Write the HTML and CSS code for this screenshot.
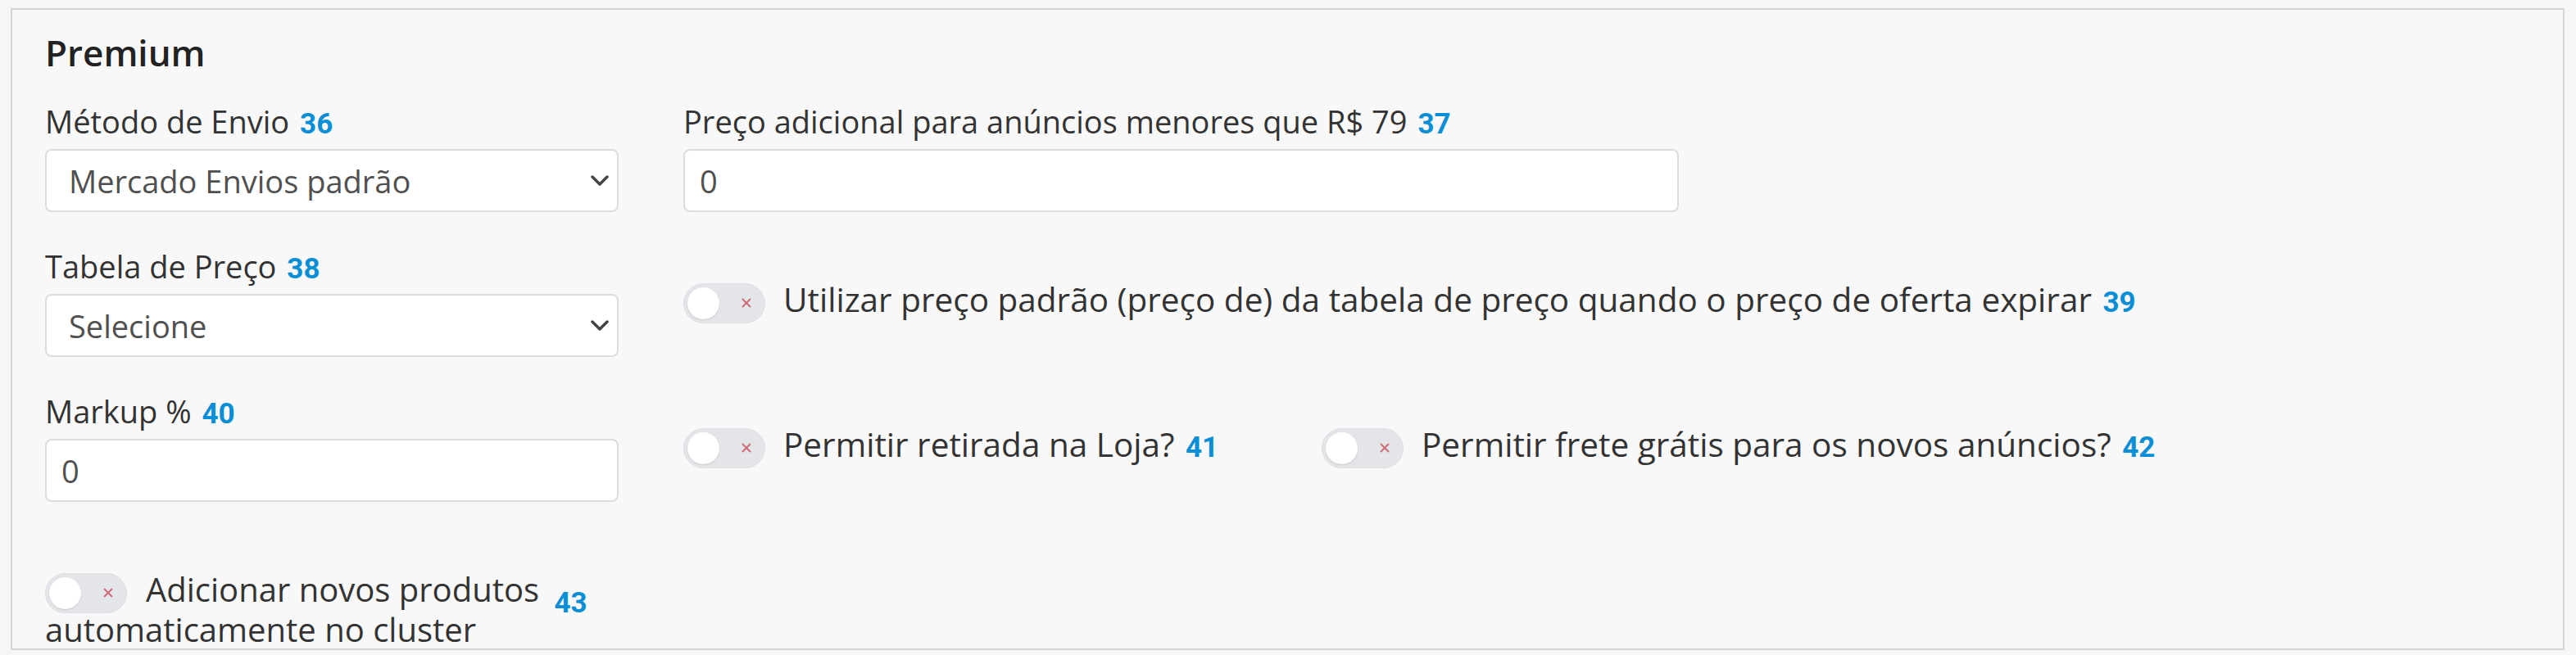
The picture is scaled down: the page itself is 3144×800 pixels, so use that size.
FILE: index.html
```html
<!DOCTYPE html>
<html lang="pt-BR">
<head>
    <meta charset="UTF-8">
    <meta name="viewport" content="width=device-width, initial-scale=1.0">
    <title>Premium</title>
    <link rel="stylesheet" href="styles.css">
</head>
<body>
    <div class="panel">
        <h2 class="panel-title">Premium</h2>

        <div class="form-grid">
            <!-- linha 1 -->
            <div class="field">
                <label class="field-label">Método de Envio <span class="num">36</span></label>
                <div class="select-wrap">
                    <select class="control control-select">
                        <option>Mercado Envios padrão</option>
                    </select>
                    <svg class="chevron" width="22" height="13" viewBox="0 0 22 13"><path d="M2 2 L11 11 L20 2" fill="none" stroke="#444" stroke-width="3.5" stroke-linecap="round" stroke-linejoin="round"/></svg>
                </div>
            </div>
            <div class="field field-wide">
                <label class="field-label">Preço adicional para anúncios menores que R$ 79 <span class="num">37</span></label>
                <input type="text" class="control control-input control-wide" value="0">
            </div>

            <!-- linha 2 -->
            <div class="field">
                <label class="field-label">Tabela de Preço <span class="num">38</span></label>
                <div class="select-wrap">
                    <select class="control control-select">
                        <option>Selecione</option>
                    </select>
                    <svg class="chevron" width="22" height="13" viewBox="0 0 22 13"><path d="M2 2 L11 11 L20 2" fill="none" stroke="#444" stroke-width="3.5" stroke-linecap="round" stroke-linejoin="round"/></svg>
                </div>
            </div>
            <div class="switch-cell span-3">
                <span class="switch"><span class="knob"></span><svg class="switch-x" width="14" height="14" viewBox="0 0 14 14"><path d="M2 2 L12 12 M12 2 L2 12" stroke="#cf6b76" stroke-width="2"/></svg></span>
                <span class="switch-label">Utilizar preço padrão (preço de) da tabela de preço quando o preço de oferta expirar <span class="num">39</span></span>
            </div>

            <!-- linha 3 -->
            <div class="field">
                <label class="field-label">Markup % <span class="num">40</span></label>
                <input type="text" class="control control-input" value="0">
            </div>
            <div class="switch-cell">
                <span class="switch"><span class="knob"></span><svg class="switch-x" width="14" height="14" viewBox="0 0 14 14"><path d="M2 2 L12 12 M12 2 L2 12" stroke="#cf6b76" stroke-width="2"/></svg></span>
                <span class="switch-label">Permitir retirada na Loja? <span class="num">41</span></span>
            </div>
            <div class="switch-cell span-2">
                <span class="switch"><span class="knob"></span><svg class="switch-x" width="14" height="14" viewBox="0 0 14 14"><path d="M2 2 L12 12 M12 2 L2 12" stroke="#cf6b76" stroke-width="2"/></svg></span>
                <span class="switch-label">Permitir frete grátis para os novos anúncios? <span class="num">42</span></span>
            </div>

            <!-- linha 4 -->
            <div class="switch-inline">
                <span class="switch"><span class="knob"></span><svg class="switch-x" width="14" height="14" viewBox="0 0 14 14"><path d="M2 2 L12 12 M12 2 L2 12" stroke="#cf6b76" stroke-width="2"/></svg></span>Adicionar novos produtos <span class="num num-low">43</span> automaticamente no cluster
            </div>
        </div>
    </div>
</body>
</html>
```

FILE: styles.css
```css
body {
    margin: 0;
    background-color: #f6f6f6;
    font-family: "Open Sans", "Liberation Sans", sans-serif;
    color: #333;
}

.panel {
    box-sizing: border-box;
    margin: 10px 0 0 13px;
    width: 3117px;
    background-color: #f8f8f8;
    border: 2px solid #d5d5d5;
    padding: 24px 40px 0 40px;
}

.panel-title {
    margin: 0 0 33px 0;
    font-size: 44px;
    line-height: 56px;
    font-weight: 600;
    color: #222;
}

.form-grid {
    display: grid;
    grid-template-columns: repeat(4, 700px);
    column-gap: 79px;
    row-gap: 43px;
    align-items: start;
}

/* campos */
.field {
    grid-column: 1;
}
.field-label {
    display: block;
    font-size: 38px;
    line-height: 46px;
    margin-bottom: 11px;
    color: #333;
    white-space: nowrap;
}
.field-wide {
    grid-column: 2 / span 2;
}
.control {
    box-sizing: border-box;
    display: block;
    width: 100%;
    height: 77px;
    margin: 0;
    background-color: #fff;
    border: 2px solid #dcdcdc;
    border-radius: 8px;
    font-family: "Open Sans", "Liberation Sans", sans-serif;
    font-size: 38px;
    color: #505050;
    outline: none;
}
.control-input {
    padding: 0 18px;
}
.control-wide {
    width: 1215px;
}
.control-select {
    -webkit-appearance: none;
    appearance: none;
    padding: 0 60px 0 27px;
}
.select-wrap {
    position: relative;
}
.chevron {
    position: absolute;
    right: 12px;
    top: 32px;
}

/* numeros azuis */
.num {
    font-family: Roboto, "Liberation Sans", sans-serif;
    font-weight: 700;
    font-size: 35px;
    line-height: 1;
    color: #0a8ed5;
    margin-left: 3px;
}
.num-low {
    vertical-align: -13px;
    line-height: 0;
    margin-left: 8px;
}

/* switches */
.switch-cell {
    grid-column: 2;
    display: flex;
    align-items: flex-start;
    padding-top: 44px;
    white-space: nowrap;
}
.span-3 {
    grid-column: 2 / span 3;
}
.span-2 {
    grid-column: 3 / span 2;
}
.switch {
    position: relative;
    display: inline-block;
    flex: none;
    width: 100px;
    height: 49px;
    box-sizing: border-box;
    border-radius: 25px;
    background-color: #e3e5e9;
    border: 1px solid #dcdfe3;
}
.knob {
    position: absolute;
    left: 4px;
    top: 4px;
    width: 39px;
    height: 39px;
    border-radius: 50%;
    background-color: #fff;
    box-shadow: 0 1px 2px rgba(0, 0, 0, 0.12);
}
.switch-x {
    position: absolute;
    left: 69px;
    top: 16px;
}
.switch-label {
    margin-left: 22px;
    font-size: 40.5px;
    line-height: 40px;
    color: #333;
}

.switch-inline {
    grid-column: 1;
    margin-top: 40px;
    font-size: 40px;
    line-height: 47px;
    color: #333;
}
.switch-inline .switch {
    vertical-align: middle;
    margin: -4px 23px -4px 0;
}
```
